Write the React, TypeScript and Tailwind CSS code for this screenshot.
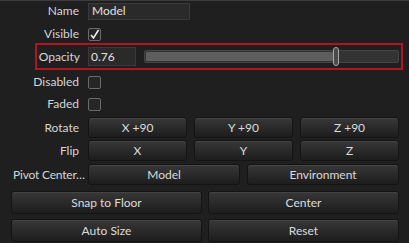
import React from "react";

const Btn = ({ children, className = "" }: { children: React.ReactNode; className?: string }) => (
  <button
    className={
      "flex items-center justify-center rounded-[3px] border border-[#141414] bg-linear-to-b from-[#383838] to-[#1d1d1d] text-[12px] text-[#dcdcdc] shadow-[inset_0_1px_0_#444] " +
      className
    }
  >
    {children}
  </button>
);

const Check = ({ checked = false }: { checked?: boolean }) => (
  <div className="flex h-[13px] w-[13px] items-center justify-center rounded-[2px] border border-[#6a6a6a] bg-[#262626]">
    {checked && (
      <svg width="11" height="11" viewBox="0 0 11 11">
        <path d="M2 6 L4.5 9 L9.5 1" fill="none" stroke="#f0f0f0" strokeWidth="1.6" />
      </svg>
    )}
  </div>
);

const Label = ({ children }: { children: React.ReactNode }) => (
  <div className="w-[80px] shrink-0 pr-[1px] text-right text-[12px] text-[#d6d6d6]">{children}</div>
);

export default function App() {
  return (
    <div
      className="h-[243px] w-[409px] overflow-hidden border-t border-[#3c3c3c] bg-[#1f1f1f]"
      style={{ fontFamily: 'Lato, "Noto Sans", sans-serif' }}
    >
      {/* Name */}
      <div className="mt-[1px] flex h-[18px] items-center gap-[8px]">
        <Label>Name</Label>
        <div className="flex h-[17px] w-[102px] items-center border border-[#3a3a3a] bg-[#2a2a2a] px-[3px] text-[12px] text-[#e0e0e0]">
          Model
        </div>
      </div>

      {/* Visible */}
      <div className="mt-[5px] flex h-[18px] items-center gap-[8px]">
        <Label>Visible</Label>
        <Check checked />
      </div>

      {/* Opacity */}
      <div className="ml-[35px] mr-[6px] flex h-[27px] items-center border-2 border-[#b3141d]">
        <div className="w-[43px] shrink-0 text-right text-[12px] text-[#d6d6d6]">Opacity</div>
        <div className="ml-[8px] flex h-[19px] w-[48px] items-center border border-[#3a3a3a] bg-[#2a2a2a] px-[2px] text-[12px] text-[#e0e0e0]">
          0.76
        </div>
        <div className="relative ml-[8px] mr-[2px] h-[13px] flex-1 rounded-[2px] border border-[#444] bg-[#333]">
          <div className="absolute left-[1px] top-[1px] h-[9px] w-[189px] rounded-[1px] bg-[#5e5e5e]" />
          <div className="absolute left-[188px] top-[-4px] h-[19px] w-[6px] rounded-full border border-[#a8a8a8] bg-[#4a4a4a]" />
        </div>
      </div>

      {/* Disabled */}
      <div className="mt-[3px] flex h-[18px] items-center gap-[8px]">
        <Label>Disabled</Label>
        <Check />
      </div>

      {/* Faded */}
      <div className="mt-[4px] flex h-[18px] items-center gap-[8px]">
        <Label>Faded</Label>
        <Check />
      </div>

      {/* Rotate */}
      <div className="mt-[4px] flex h-[21px] items-center gap-[8px]">
        <Label>Rotate</Label>
        <div className="grid w-[311px] grid-cols-3 gap-[7px]">
          <Btn className="h-[21px]">X +90</Btn>
          <Btn className="h-[21px]">Y +90</Btn>
          <Btn className="h-[21px]">Z +90</Btn>
        </div>
      </div>

      {/* Flip */}
      <div className="mt-[2px] flex h-[21px] items-center gap-[8px]">
        <Label>Flip</Label>
        <div className="grid w-[311px] grid-cols-3 gap-[7px]">
          <Btn className="h-[21px]">X</Btn>
          <Btn className="h-[21px]">Y</Btn>
          <Btn className="h-[21px]">Z</Btn>
        </div>
      </div>

      {/* Pivot */}
      <div className="mt-[3px] flex h-[21px] items-center gap-[8px]">
        <div className="w-[80px] shrink-0 pl-[13px] text-[12px] tracking-[-0.2px] text-[#d6d6d6] whitespace-nowrap">Pivot Center…</div>
        <div className="grid w-[311px] grid-cols-2 gap-[7px]">
          <Btn className="h-[21px]">Model</Btn>
          <Btn className="h-[21px]">Environment</Btn>
        </div>
      </div>

      {/* Actions */}
      <div className="ml-[11px] mt-[6px] grid w-[388px] grid-cols-2 gap-x-[6px] gap-y-[5px]">
        <Btn className="h-[23px]">Snap to Floor</Btn>
        <Btn className="h-[23px]">Center</Btn>
        <Btn className="h-[23px]">Auto Size</Btn>
        <Btn className="h-[23px]">Reset</Btn>
      </div>
    </div>
  );
}
